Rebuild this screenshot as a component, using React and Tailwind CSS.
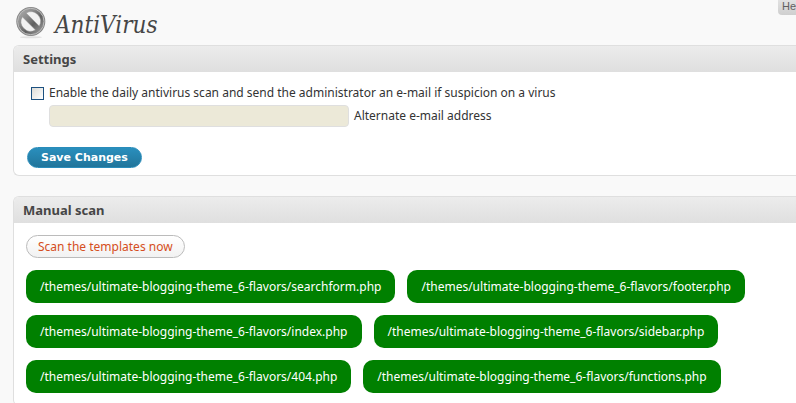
import React, { useState } from 'react';

const templates = [
    '/themes/ultimate-blogging-theme_6-flavors/searchform.php',
    '/themes/ultimate-blogging-theme_6-flavors/footer.php',
    '/themes/ultimate-blogging-theme_6-flavors/index.php',
    '/themes/ultimate-blogging-theme_6-flavors/sidebar.php',
    '/themes/ultimate-blogging-theme_6-flavors/404.php',
    '/themes/ultimate-blogging-theme_6-flavors/functions.php',
];

const BlockIcon = () => (
    <svg width="32" height="32" viewBox="0 0 32 32" aria-hidden="true">
        <defs>
            <linearGradient id="disc" x1="0" y1="0" x2="1" y2="1">
                <stop offset="0" stopColor="#b4b4b4" />
                <stop offset="0.35" stopColor="#8a8a8a" />
                <stop offset="0.6" stopColor="#606060" />
                <stop offset="1" stopColor="#a8a8a8" />
            </linearGradient>
        </defs>
        <ellipse cx="15" cy="30.3" rx="11" ry="1" fill="#e2e2e2" />
        <circle cx="14.8" cy="14.5" r="14.5" fill="#858585" />
        <circle cx="14.8" cy="14.5" r="13.2" fill="url(#disc)" stroke="#bdbdbd" strokeWidth="1" />
        {/* openings either side of the slash */}
        <path d="M10.1 6 A9.7 9.7 0 0 1 23.3 19.2 Z" fill="#f2f2f2" stroke="#8c8c8c" strokeWidth="0.5" />
        <path d="M6.3 9.8 A9.7 9.7 0 0 0 19.5 23 Z" fill="#f2f2f2" stroke="#8c8c8c" strokeWidth="0.5" />
    </svg>
);

const Panel = ({ title, children }) => (
    <section className="bg-white border border-r-0 border-[#dfdfdf] rounded-l-md overflow-hidden">
        <h2 className="h-[26px] pl-[9px] flex items-center bg-gradient-to-b from-[#ececec] to-[#dfdfdf] text-[13px] leading-4 font-bold text-[#464646] font-['Noto_Sans',sans-serif]">
            {title}
        </h2>
        {children}
    </section>
);

const App = () => {
    const [enabled, setEnabled] = useState(false);
    const [email, setEmail] = useState('');

    return (
        <div className="min-h-screen pl-[13px] bg-[#f9f9f9] text-[12px] leading-4 text-[#333] font-['Noto_Sans',Verdana,sans-serif]">
            <header className="h-[45px] flex items-start justify-between">
                <div className="flex items-start gap-[7px] pl-[3px] pt-[7px]">
                    <BlockIcon />
                    <h1 className="text-[24px] leading-9 italic text-[#464646] font-['DejaVu_Serif_Condensed','DejaVu_Serif',Georgia,serif]">AntiVirus</h1>
                </div>
                <button
                    type="button"
                    className="h-[15px] pl-1 flex items-start rounded-bl bg-gradient-to-b from-[#e2e2e2] to-[#cfcfcf] text-[11px] leading-3 text-[#606060] font-['Liberation_Sans',Arial,sans-serif]"
                >
                    He
                </button>
            </header>

            <Panel title="Settings">
                <form onSubmit={e => e.preventDefault()} className="pl-[13px] pt-[13px] pb-[7px]">
                    <label className="flex items-center gap-[5px] pl-1">
                        <input
                            type="checkbox"
                            checked={enabled}
                            onChange={e => setEnabled(e.target.checked)}
                            className="appearance-none w-[13px] h-[13px] border border-[#1c5180] bg-gradient-to-br from-[#dcdcd7] to-white checked:bg-[#1c5180]"
                        />
                        Enable the daily antivirus scan and send the administrator an e-mail if suspicion on a virus
                    </label>
                    <label className="flex items-center gap-[5px] pl-[22px] mt-[4px]">
                        <input
                            type="text"
                            value={email}
                            disabled={!enabled}
                            onChange={e => setEmail(e.target.value)}
                            className="w-[300px] h-[22px] px-1 border border-[#dfdfdf] rounded bg-[#ece9d8]"
                        />
                        Alternate e-mail address
                    </label>
                    <button
                        type="submit"
                        className="mt-5 h-[21px] px-[13px] rounded-full border border-[#298cba] bg-gradient-to-b from-[#2a8fbd] to-[#21759b] text-white text-[11px] font-bold leading-4 font-['DejaVu_Sans',Verdana,sans-serif]"
                    >
                        Save Changes
                    </button>
                </form>
            </Panel>

            <div className="mt-5">
                <Panel title="Manual scan">
                    <div className="pl-3 pt-3 pb-3">
                        <button
                            type="button"
                            className="h-[23px] px-[11px] rounded-full border border-[#bbb] bg-gradient-to-b from-white to-[#f2f2f2] text-[#d54e21]"
                        >
                            Scan the templates now
                        </button>
                        <ul className="mt-3 flex flex-wrap gap-3 text-white">
                            {templates.map(path => (
                                <li key={path} className="h-[33px] px-[14px] flex items-center rounded-[10px] bg-[#008000]">
                                    {path}
                                </li>
                            ))}
                        </ul>
                    </div>
                </Panel>
            </div>
        </div>
    );
};

export default App;
